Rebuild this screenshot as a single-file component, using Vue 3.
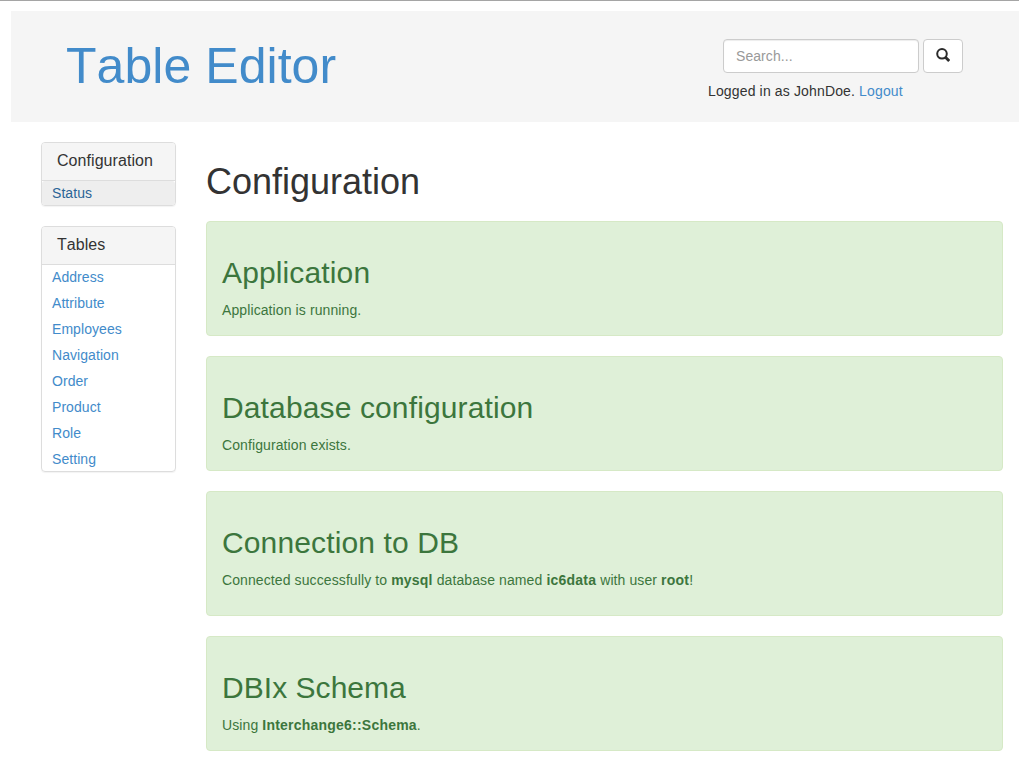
<script setup>
const tables = ['Address', 'Attribute', 'Employees', 'Navigation', 'Order', 'Product', 'Role', 'Setting']
</script>

<template>
  <div class="page">
    <header class="header">
      <h1 class="brand"><a>Table Editor</a></h1>
      <div class="tools">
        <form class="search" @submit.prevent>
          <input type="text" placeholder="Search..." />
          <button type="submit" aria-label="Search">
            <svg width="14" height="14" viewBox="0 0 14 14">
              <circle cx="6" cy="5.8" r="4.8" fill="none" stroke="#2b2b2b" stroke-width="2" />
              <path d="M9.2 9L13.2 13" stroke="#2b2b2b" stroke-width="2.8" />
            </svg>
          </button>
        </form>
        <div class="login">Logged in as JohnDoe. <a>Logout</a></div>
      </div>
    </header>
    <div class="body">
      <aside class="side">
        <section class="panel">
          <h3>Configuration</h3>
          <ul><li class="active"><a>Status</a></li></ul>
        </section>
        <section class="panel">
          <h3>Tables</h3>
          <ul><li v-for="t in tables" :key="t"><a>{{ t }}</a></li></ul>
        </section>
      </aside>
      <main class="main">
        <h1>Configuration</h1>
        <section class="alert"><h2>Application</h2><p>Application is running.</p></section>
        <section class="alert"><h2>Database configuration</h2><p>Configuration exists.</p></section>
        <section class="alert tall"><h2>Connection to DB</h2><p>Connected successfully to <b>mysql</b> database named <b>ic6data</b> with user <b>root</b>!</p></section>
        <section class="alert"><h2 class="tight">DBIx Schema</h2><p>Using <b>Interchange6::Schema</b>.</p></section>
      </main>
    </div>
  </div>
</template>

<style>
body { margin: 0; background: #fff; overflow: hidden; }
</style>

<style scoped>
* { box-sizing: border-box; }
.page { height: 766px; overflow: hidden; border-top: 1px solid #a5a5a5; padding: 10px 0 0 11px; font: 14px/20px "Liberation Sans", Arial, sans-serif; font-kerning: none; letter-spacing: .1px; color: #333; }
h1, h2, h3, p, ul { margin: 0; padding: 0; font-weight: 400; }
b { letter-spacing: .22px; }
a { color: #428bca; text-decoration: none; }
.header { height: 111px; background: #f5f5f5; display: flex; justify-content: space-between; padding: 28px 56px 0 55px; }
.brand { font-size: 50px; line-height: 55px; letter-spacing: .05px; }
.tools { width: 255px; }
.search { display: flex; justify-content: flex-end; gap: 4px; }
input { width: 196px; height: 34px; padding: 6px 12px; border: 1px solid #ccc; border-radius: 4px; font: inherit; letter-spacing: .07px; background: #fff; box-shadow: inset 0 1px 1px rgba(0,0,0,.075); }
input::placeholder { color: #999; opacity: 1; }
button { width: 40px; height: 34px; padding: 0 0 2px; border: 1px solid #ccc; border-radius: 4px; background: #fff; display: flex; align-items: center; justify-content: center; }
.login { margin-top: 8px; letter-spacing: .145px; }
.body { display: flex; gap: 30px; padding: 20px 16px 0 30px; }
.side { width: 135px; flex: none; letter-spacing: .06px; }
.panel { border: 1px solid #ddd; border-radius: 4px; margin-bottom: 20px; box-shadow: 0 1px 1px rgba(0,0,0,.05); overflow: hidden; }
.panel h3 { height: 38px; padding: 9px 15px; font-size: 16px; line-height: 18px; background: #f5f5f5; border-bottom: 1px solid #ddd; }
.panel ul { list-style: none; }
li { height: 26px; padding: 2px 10px; }
li:last-child { height: 24px; }
.panel li.active { background: #eee; height: 24px; border-radius: 3px 3px 0 0; }
.active a { color: #2a6496; }
.main { flex: 1; }
.main h1 { font-size: 36px; line-height: 40px; margin: 20px 0 19px; letter-spacing: 0; }
.alert { height: 115px; padding: 34px 15px 0; margin-bottom: 20px; border: 1px solid #d6e9c6; border-radius: 4px; background: #dff0d8; color: #3c763d; }
.alert.tall { height: 125px; }
.alert h2 { font-size: 30px; line-height: 33px; margin-bottom: 11px; letter-spacing: .13px; }
.alert h2.tight { letter-spacing: .04px; }
</style>
